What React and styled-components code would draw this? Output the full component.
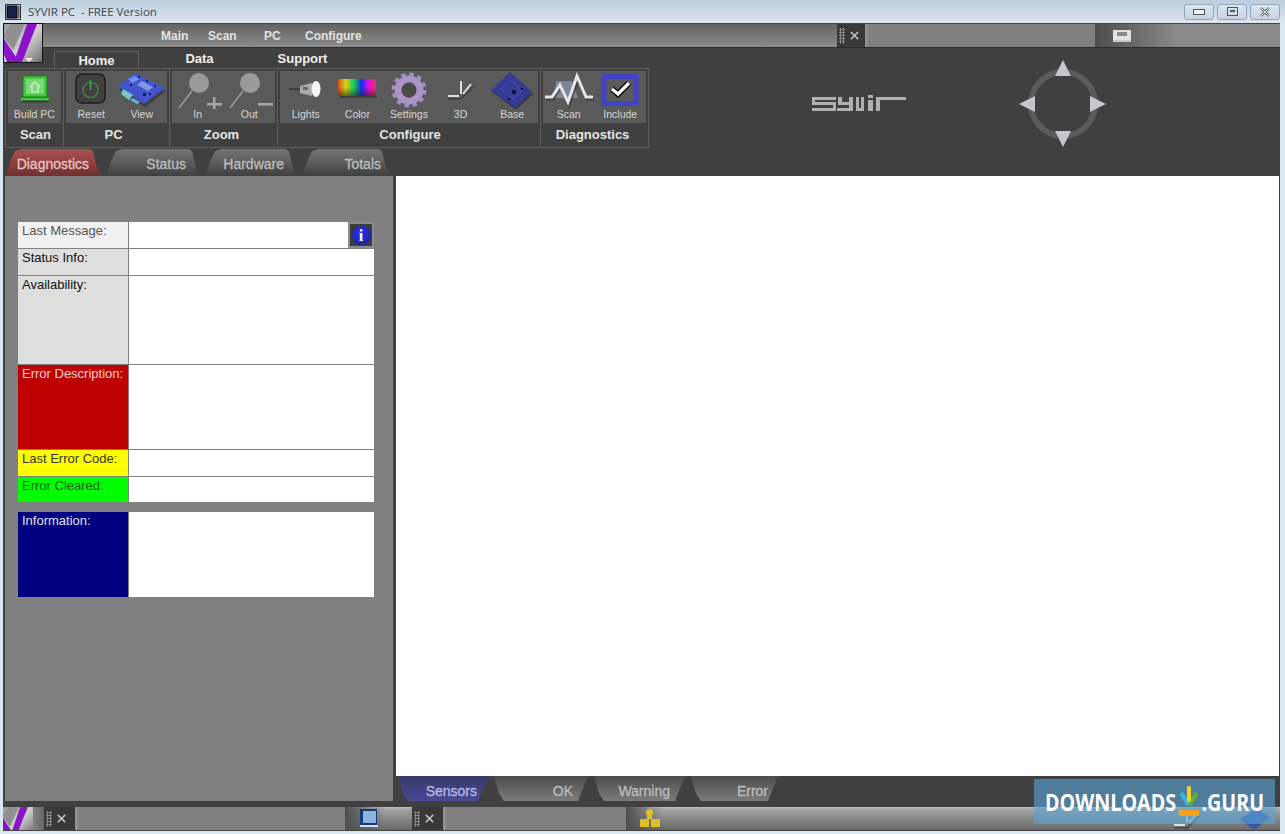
import React from 'react';
import styled, { createGlobalStyle } from 'styled-components';
import { X } from 'lucide-react';

const GlobalStyle = createGlobalStyle`
  html, body { margin: 0; padding: 0; overflow: hidden; }
  body { font-family: "Liberation Sans", Arial, sans-serif; }
`;

function AppMark({ size = 40, id = 'markBg' }) {
  return (
    <svg width={size} height={size} viewBox="0 0 40 40">
      <defs>
        <linearGradient id={id} x1="0" y1="0" x2="1" y2="1">
          <stop offset="0" stopColor="#9a9a9a" />
          <stop offset=".5" stopColor="#cfcfcf" />
          <stop offset="1" stopColor="#666" />
        </linearGradient>
      </defs>
      <rect width="40" height="40" fill={`url(#${id})`} />
      <polygon points="7,0 21,0 9,26 0,13 0,10" fill="#8f8f8f" />
      <polygon points="0,15 12,33 11,38 3,38 0,30" fill="#8a12c8" />
      <polygon points="23,0 33,0 18,38 10,38" fill="#8a12c8" />
      <polygon points="21,34 29,34 25,38" fill="#eee" />
    </svg>
  );
}

function TitleIcon() {
  return (
    <svg width="16" height="16" viewBox="0 0 16 16">
      <rect x="0.5" y="0.5" width="15" height="15" fill="#d8d8d8" stroke="#333" />
      <rect x="2" y="2" width="10" height="12" fill="#15204f" stroke="#000" />
      <rect x="13" y="2" width="1.5" height="12" fill="#555" />
    </svg>
  );
}

function BuildIcon() {
  return (
    <svg width="40" height="36" viewBox="0 0 40 36">
      <rect x="8" y="4" width="24" height="21" fill="#46c742" stroke="#1e7c1c" />
      <rect x="11" y="7" width="18" height="15" fill="#7dd879" />
      <path d="M15 15l5-5 5 5M17 14v6h6v-6" fill="none" stroke="#d6f2d3" strokeWidth="1.1" />
      <rect x="6" y="26" width="28" height="2.5" fill="#3ecb3a" />
      <rect x="7" y="28.5" width="27" height="2" fill="#222" opacity=".55" />
    </svg>
  );
}

function ResetIcon() {
  return (
    <svg width="40" height="36" viewBox="0 0 40 36">
      <rect x="5" y="2" width="29" height="29" rx="6" fill="#404040" stroke="#1c1c1c" strokeWidth="1.5" />
      <circle cx="19.5" cy="18" r="7.5" fill="none" stroke="#3f9a3f" strokeWidth="1.2" />
      <line x1="19.5" y1="8" x2="19.5" y2="18" stroke="#45a845" strokeWidth="1.4" />
    </svg>
  );
}

function BoardIcon() {
  return (
    <svg width="52" height="36" viewBox="0 0 52 36">
      <polygon points="3,16 29,33 50,17 19,2" fill="#222" opacity=".5" transform="translate(0 2)" />
      <polygon points="2,14 28,32 49,16 19,1" fill="#4455cc" />
      <polygon points="7,17 17,23 13,28 5,22" fill="#78c6c4" />
      <polygon points="17,26 24,30 21,32 14,28" fill="#5fb4d8" />
      <polygon points="26,9 37,15 32,19 21,13" fill="#7f97e6" />
      <polygon points="12,7 19,4 24,7 16,11" fill="#6f8fe8" />
      <g fill="#141c5c">
        <rect x="22" y="4" width="2" height="2" />
        <rect x="30" y="8" width="2" height="2" />
        <rect x="38" y="13" width="2" height="2" />
        <rect x="14" y="12" width="2" height="2" />
        <rect x="33" y="21" width="2" height="2" />
        <rect x="27" y="21" width="3" height="3" />
      </g>
    </svg>
  );
}

function ZoomIcon({ out }) {
  return (
    <svg width="50" height="38" viewBox="0 0 50 38">
      <circle cx="26" cy="12" r="10" fill="#9a9a9a" />
      <line x1="19" y1="20" x2="6" y2="37" stroke="#9a9a9a" strokeWidth="1.6" />
      <rect x="34" y="32" width="15" height="2.5" fill="#a8a8a8" />
      {!out && <rect x="40" y="26" width="2.5" height="15" fill="#a8a8a8" />}
    </svg>
  );
}

function LightsIcon() {
  return (
    <svg width="40" height="30" viewBox="0 0 40 30">
      <line x1="3" y1="14" x2="14" y2="14" stroke="#222" />
      <polygon points="14,11 26,8 26,21 14,18" fill="#aaa" />
      <rect x="17" y="12" width="5" height="3" fill="#666" />
      <ellipse cx="30" cy="14" rx="4.5" ry="8" fill="#f4f4f4" />
    </svg>
  );
}

function ColorIcon() {
  return (
    <svg width="40" height="26" viewBox="0 0 40 26">
      <defs>
        <linearGradient id="rainbow" x1="0" y1="0" x2="1" y2="0">
          <stop offset="0" stopColor="#d0501c" />
          <stop offset=".2" stopColor="#e0d010" />
          <stop offset=".42" stopColor="#10d050" />
          <stop offset=".62" stopColor="#1030f0" />
          <stop offset=".8" stopColor="#e010e0" />
          <stop offset="1" stopColor="#f03060" />
        </linearGradient>
        <linearGradient id="rainbowFade" x1="0" y1="0" x2="0" y2="1">
          <stop offset="0" stopColor="#222" stopOpacity="0" />
          <stop offset=".5" stopColor="#222" stopOpacity="0" />
          <stop offset="1" stopColor="#222" stopOpacity=".6" />
        </linearGradient>
      </defs>
      <rect x="1" y="2" width="38" height="17" fill="url(#rainbow)" />
      <rect x="1" y="2" width="38" height="17" fill="url(#rainbowFade)" />
      <rect x="3" y="19" width="37" height="2" fill="#2a2a2a" opacity=".6" />
    </svg>
  );
}

function GearIcon() {
  return (
    <svg width="40" height="36" viewBox="0 0 40 36">
      <circle cx="20" cy="18" r="11" fill="none" stroke="#ab95c8" strokeWidth="7" />
      <circle cx="20" cy="18" r="15.5" fill="none" stroke="#a48ec2" strokeWidth="4" strokeDasharray="4.4 3.7" />
      <circle cx="20" cy="18" r="7.5" fill="#4b4b4b" />
    </svg>
  );
}

function AxesIcon({ color = '#dedede' }) {
  return (
    <svg width="36" height="30" viewBox="0 0 36 30">
      <path d="M5 21H16M18 19V6M20 19L28 9" fill="none" stroke={color} strokeWidth="2" />
      <path d="M5 24H18L31 11" fill="none" stroke="#2f2f2f" strokeWidth="1.5" opacity=".6" />
    </svg>
  );
}

function BaseIcon() {
  return (
    <svg width="46" height="38" viewBox="0 0 46 38">
      <polygon points="2,19 21,1 43,21 26,37" fill="#1e1e1e" opacity=".55" transform="translate(1 2)" />
      <polygon points="2,19 21,1 43,21 26,37" fill="#343a96" />
      <path d="M12 18l10-9 11 11-9 8z" fill="none" stroke="#4d55b8" />
      <circle cx="25" cy="21" r="2" fill="#0a0a20" />
      <rect x="19" y="27" width="2" height="2" fill="#0a0a20" />
      <rect x="32" y="17" width="2" height="2" fill="#0a0a20" />
    </svg>
  );
}

function WaveIcon() {
  return (
    <svg width="50" height="36" viewBox="0 0 50 36">
      <polygon points="12,9 28,9 34,26 10,26" fill="#8a97a8" opacity=".75" />
      <path d="M1 25H8L16 13L24 31L33 4L42 25H49" fill="none" stroke="#222" strokeWidth="3" opacity=".5" transform="translate(1 2)" />
      <path d="M1 25H8L16 13L24 30L33 4L42 25H49" fill="none" stroke="#e6e6e6" strokeWidth="3" />
    </svg>
  );
}

function IncludeIcon() {
  return (
    <svg width="38" height="32" viewBox="0 0 38 32">
      <rect x="3" y="2.5" width="32" height="27" fill="none" stroke="#4343c8" strokeWidth="5" />
      <path d="M11 15l6 5 11-11" fill="none" stroke="#000" strokeWidth="6" />
      <path d="M11 15l6 5 11-11" fill="none" stroke="#fff" strokeWidth="3.2" />
    </svg>
  );
}

function BrandMark() {
  return (
    <svg width="94" height="17" viewBox="0 0 94 17" fill="#b0b0b0" role="img" aria-label="syvir">
      <rect x="0" y="2" width="24" height="3" />
      <rect x="0" y="2" width="3" height="8" />
      <rect x="0" y="7" width="24" height="3" />
      <rect x="21" y="7" width="3" height="9" />
      <rect x="0" y="13" width="24" height="3" />
      <rect x="26" y="2" width="4" height="8" />
      <rect x="26" y="7" width="15" height="3" />
      <rect x="37" y="2" width="4" height="14" />
      <rect x="25" y="13" width="15" height="3" />
      <rect x="44" y="2" width="3" height="14" />
      <rect x="49" y="2" width="3" height="14" />
      <rect x="44" y="13" width="8" height="3" />
      <rect x="56" y="0" width="5" height="3" />
      <rect x="56" y="5" width="5" height="11" />
      <rect x="64" y="2" width="4" height="14" />
      <rect x="64" y="2" width="30" height="3" />
    </svg>
  );
}

function NavPad() {
  return (
    <svg width="88" height="88" viewBox="0 0 88 88" fill="#c6c6cc">
      <circle cx="44" cy="44" r="32" fill="none" stroke="#5b5b5b" strokeWidth="6" />
      <polygon points="44,0 52,16 36,16" />
      <polygon points="44,87 52,71 36,71" />
      <polygon points="0,44 16,36 16,52" />
      <polygon points="87,44 71,36 71,52" />
    </svg>
  );
}

function ScreenGlyph() {
  return (
    <svg width="20" height="14" viewBox="0 0 20 14">
      <rect x="1" y="1" width="18" height="10" fill="#e2e2e2" />
      <rect x="5" y="3" width="10" height="4" fill="#8a8a8a" />
      <rect x="1" y="11" width="18" height="2" fill="#c8c8c8" />
    </svg>
  );
}

function PcBlue() {
  return (
    <svg width="22" height="22" viewBox="0 0 22 22">
      <rect x="2" y="1" width="17" height="16" fill="#123a7c" />
      <rect x="5" y="3" width="13" height="12" fill="#8fb2d8" />
      <rect x="2" y="17" width="18" height="2" fill="#cfe2f5" />
    </svg>
  );
}

function TreeYellow() {
  return (
    <svg width="24" height="20" viewBox="0 0 24 20" fill="#e0c020">
      <circle cx="11.5" cy="3.5" r="3.5" />
      <rect x="9" y="6" width="5" height="4" />
      <rect x="2" y="10" width="9" height="8" />
      <rect x="13" y="10" width="9" height="8" />
    </svg>
  );
}

function BaseSmall() {
  return (
    <svg width="32" height="24" viewBox="0 0 32 24">
      <polygon points="1,12 15,23 31,10 17,1" fill="#3a55a8" />
    </svg>
  );
}

function DownloadMark() {
  return (
    <svg width="31" height="36" viewBox="0 0 31 36">
      <path d="M6 9L15 21" stroke="#36b5e0" strokeWidth="5" />
      <path d="M25 9L16 21" stroke="#5cb531" strokeWidth="5" />
      <rect x="13" y="2" width="5" height="16" rx="2" fill="#f0d020" />
      <rect x="3" y="26" width="25" height="6" rx="1" fill="#f5a31c" />
    </svg>
  );
}

const Window = styled.div`
  position: relative;
  width: 1285px;
  height: 834px;
  overflow: hidden;
  display: flex;
  flex-direction: column;
  background: #dbe6ef;
`;

const TitleBar = styled.header`
  height: 23px;
  flex: none;
  display: flex;
  align-items: center;
  padding: 0 5px;
  background: linear-gradient(#bccddc, #dce7f0);
`;

const TitleText = styled.span`
  margin-left: 7px;
  font: 11.5px "Open Sans", sans-serif;
  color: #3c4650;
  white-space: pre;
`;

const WindowButtons = styled.div`
  margin-left: auto;
  display: flex;
  gap: 3px;
`;

const WindowButton = styled.button`
  width: 30px;
  height: 16px;
  padding: 0;
  display: flex;
  align-items: center;
  justify-content: center;
  border: 1px solid #8fa5ba;
  border-radius: 3px;
  background: linear-gradient(#dbe6f0, #c3d3e1);
  color: #444;
`;

const Frame = styled.div`
  flex: none;
  height: 784px;
  margin: 0 5px 0 3px;
  display: flex;
  flex-direction: column;
  background: #404040;
  border-top: 1px solid #444;
  box-sizing: border-box;
`;

const MenuBar = styled.nav`
  flex: none;
  height: 24px;
  display: flex;
  align-items: stretch;
  border-bottom: 1px solid #2c2c2c;
  box-sizing: border-box;
  background: linear-gradient(#636363, #8c8c8c);
`;

const MenuItems = styled.div`
  width: 834px;
  box-sizing: border-box;
  padding-left: 158px;
  display: flex;
  align-items: center;
`;

const MenuItem = styled.span`
  width: ${p => p.$w}px;
  font-size: 12px;
  font-weight: 700;
  color: #e2e2e2;
`;

const Grabber = styled.div`
  width: ${p => p.$w}px;
  flex: none;
  display: flex;
  align-items: center;
  gap: 3px;
  padding: 0 2px;
  box-sizing: border-box;
  background: #393939;
  color: #d2d2d2;
  border-right: 3px solid #909090;
`;

const Grip = styled.i`
  width: 6px;
  height: 16px;
  flex: none;
  background: radial-gradient(circle, #888 1px, transparent 1.3px) 0 0 / 3px 3px;
`;

const MenuField = styled.div`
  width: 227px;
  flex: none;
  background: #808080;
`;

const MenuRest = styled.div`
  flex: 1;
  display: flex;
  align-items: center;
  padding-left: 17px;
  background: linear-gradient(90deg, #4d4d4d, #8a8a8a 45%);
`;

const LogoButton = styled.div`
  position: absolute;
  left: 3px;
  top: 23px;
  width: 40px;
  height: 40px;
  border: 1px solid #111;
  box-sizing: border-box;
  overflow: hidden;
  line-height: 0;
`;

const TopArea = styled.div`
  flex: none;
  height: 128px;
  display: flex;
`;

const TopLeft = styled.div`
  width: 646px;
  flex: none;
  margin-left: 2px;
`;

const RibbonTabs = styled.div`
  height: 20px;
  display: flex;
  align-items: flex-end;
  padding-left: 49px;
`;

const RibbonTab = styled.div`
  width: ${p => p.$w}px;
  height: ${p => (p.$active ? 17 : 20)}px;
  flex: none;
  box-sizing: border-box;
  display: flex;
  align-items: center;
  justify-content: center;
  font-size: 13px;
  font-weight: 700;
  color: #efefef;
  border: ${p => (p.$active ? '1px solid #5f5f5f' : 'none')};
  border-bottom: none;
`;

const Ribbon = styled.div`
  width: 644px;
  height: 80px;
  display: flex;
  box-sizing: border-box;
  border: 1px solid #5f5f5f;
`;

const RibbonGroup = styled.section`
  width: ${p => p.$w}px;
  flex: none;
  box-sizing: border-box;
  display: flex;
  flex-direction: column;
  padding: 2px 2px 0;
  border-right: ${p => (p.$last ? 'none' : '1px solid #5f5f5f')};
`;

const Tile = styled.div`
  height: 52px;
  display: flex;
  background: #5a5a5a;
`;

const GroupLabel = styled.div`
  flex: 1;
  display: flex;
  align-items: center;
  justify-content: center;
  padding: 0 ${p => p.$r || 0}px 2px ${p => p.$l || 0}px;
  font-size: 13px;
  font-weight: 700;
  color: #e4e4e4;
`;

const ToolButton = styled.div`
  flex: 1;
  min-width: 0;
  display: flex;
  flex-direction: column;
  align-items: center;
`;

const ToolIcon = styled.div`
  height: 37px;
  display: flex;
  align-items: center;
  justify-content: center;
  line-height: 0;
`;

const ToolLabel = styled.span`
  font-size: 10.5px;
  line-height: 12px;
  color: #d6d6d6;
  white-space: nowrap;
`;

const SubTabs = styled.div`
  height: 27px;
  margin-top: 1px;
  display: flex;
  gap: 5px;
  padding-left: 1px;
`;

const Tab = styled.div`
  width: ${p => p.$w}px;
  flex: none;
  box-sizing: border-box;
  display: flex;
  align-items: center;
  justify-content: flex-end;
  padding-right: ${p => p.$pad}px;
  padding-top: 2px;
  font-size: 14px;
  -webkit-text-stroke: 0.3px currentColor;
  color: ${p => p.$fg || '#bdbdbd'};
  background: ${p => p.$bg};
  clip-path: ${p => p.$clip};
`;

const topClip = 'polygon(0 100%, 4px 45%, 9px 8%, 15px 0, calc(100% - 12px) 0, calc(100% - 9px) 8%, calc(100% - 5px) 70%, 100% 100%)';
const bottomClip = 'polygon(0 0, 5px 70%, 10px 100%, calc(100% - 12px) 100%, calc(100% - 8px) 60%, calc(100% - 3px) 10%, 100% 0)';

const BrandArea = styled.div`
  flex: 1;
  display: flex;
  align-items: flex-start;
`;

const BrandLogo = styled.div`
  margin: 47px 0 0 161px;
  line-height: 0;
`;

const BrandNav = styled.div`
  margin: 12px 0 0 113px;
  line-height: 0;
`;

const Main = styled.main`
  flex: none;
  height: 631px;
  display: flex;
  gap: 3px;
  padding-left: 2px;
`;

const SidePanel = styled.aside`
  width: 388px;
  height: 625px;
  flex: none;
  box-sizing: border-box;
  padding: 46px 19px 0 13px;
  background: #808080;
`;

const InfoTable = styled.div`
  display: flex;
  flex-direction: column;
  gap: 1px;
`;

const InfoRow = styled.div`
  height: ${p => p.$h}px;
  display: flex;
  gap: 1px;
  margin-top: ${p => p.$gap || 0}px;
`;

const InfoLabel = styled.div`
  width: 110px;
  flex: none;
  box-sizing: border-box;
  padding: 1px 0 0 4px;
  font-size: 13px;
  line-height: 15px;
  white-space: nowrap;
  background: ${p => p.$bg};
  color: ${p => p.$fg};
`;

const InfoValue = styled.div`
  flex: 1;
  display: flex;
  justify-content: flex-end;
  background: #fff;
`;

const InfoButton = styled.button`
  width: 26px;
  height: 26px;
  padding: 0;
  display: flex;
  align-items: center;
  justify-content: center;
  box-sizing: border-box;
  border: 2px solid #8d8d8d;
  background: #3c3c3c;
`;

const InfoDot = styled.span`
  width: 19px;
  height: 19px;
  border-radius: 50%;
  text-align: center;
  font: 700 16px/19px "Liberation Serif", serif;
  color: #fff;
  background: radial-gradient(circle at 45% 40%, #2c35e8, #141a9c);
`;

const ContentColumn = styled.div`
  width: 883px;
  flex: none;
  display: flex;
  flex-direction: column;
`;

const Canvas = styled.div`
  height: 600px;
  flex: none;
  background: #fff;
`;

const BottomTabs = styled.div`
  height: 25px;
  display: flex;
  gap: 4px;
  padding-left: 2px;
`;

const BottomTab = styled(Tab)`
  padding-top: 4px;
`;

const StatusBar = styled.footer`
  flex: none;
  height: 24px;
  margin: 0 5px 0 3px;
  display: flex;
  align-items: stretch;
  border-bottom: 1px solid #444;
  box-sizing: border-box;
  background: linear-gradient(#c4c4c4 0, #a4a4a4 2px, #686868 100%);
`;

const StatusMark = styled.div`
  width: 41px;
  flex: none;
  overflow: hidden;
  line-height: 0;
  background: linear-gradient(90deg, #555, #a8a8a8 40%, #666);
`;

const StatusField = styled.div`
  width: ${p => p.$w}px;
  flex: none;
  background: #808080;
`;

const StatusGroup = styled.div`
  width: ${p => p.$w}px;
  flex: none;
  display: flex;
  align-items: center;
  padding-left: ${p => p.$pad}px;
  box-sizing: border-box;
  background: linear-gradient(90deg, #4f4f4f, rgba(79, 79, 79, 0) 60%);
`;

const StatusRest = styled.div`
  flex: 1;
  display: flex;
  align-items: center;
  justify-content: flex-end;
  gap: 34px;
  padding-right: 9px;
`;

const BottomEdge = styled.div`
  flex: 1;
  background: #dbe6ef;
`;

const Watermark = styled.div`
  position: absolute;
  left: 1034px;
  top: 779px;
  width: 241px;
  height: 45px;
  display: flex;
  align-items: center;
  justify-content: center;
  background: rgba(90, 163, 211, 0.62);
`;

const WatermarkText = styled.div`
  flex: none;
  display: flex;
  align-items: center;
  color: #fff;
  font: 700 24px "Open Sans", sans-serif;
  transform: scaleX(0.82);
`;

const tools = [
  { w: 58, label: 'Scan', l: 2, items: [['Build PC', <BuildIcon />]] },
  { w: 106, label: 'PC', r: 6, items: [['Reset', <ResetIcon />], ['View', <BoardIcon />]] },
  { w: 108, label: 'Zoom', r: 4, items: [['In', <ZoomIcon />], ['Out', <ZoomIcon out />]] },
  {
    w: 263,
    label: 'Configure',
    l: 2,
    items: [
      ['Lights', <LightsIcon />],
      ['Color', <ColorIcon />],
      ['Settings', <GearIcon />],
      ['3D', <AxesIcon />],
      ['Base', <BaseIcon />],
    ],
  },
  { w: 107, label: 'Diagnostics', r: 4, last: true, items: [['Scan', <WaveIcon />], ['Include', <IncludeIcon />]] },
];

const redTab = 'linear-gradient(#a85252, #8a3c3c 60%, #6e3030)';
const greyTab = 'linear-gradient(#747474, #5a5a5a 55%, #3f3f3f)';
const blueTab = 'linear-gradient(#383868, #4a4a96)';
const greyBottom = 'linear-gradient(#4c4c4c, #7c7c7c)';

function App() {
  return (
    <Window>
      <GlobalStyle />
      <TitleBar>
        <TitleIcon />
        <TitleText>SYVIR PC  - FREE Version</TitleText>
        <WindowButtons>
          <WindowButton>
            <svg width="12" height="6" viewBox="0 0 12 6"><rect x=".5" y=".5" width="11" height="5" fill="#eef3f7" stroke="#555" /></svg>
          </WindowButton>
          <WindowButton>
            <svg width="11" height="9" viewBox="0 0 11 9"><rect x=".5" y=".5" width="10" height="8" fill="none" stroke="#555" /><rect x="3" y="3" width="5" height="2" fill="#555" /></svg>
          </WindowButton>
          <WindowButton>
            <svg width="12" height="10" viewBox="0 0 12 10"><path d="M2 1l8 8M10 1l-8 8" stroke="#555" strokeWidth="2.4" /><path d="M2 1l8 8M10 1l-8 8" stroke="#eef3f7" strokeWidth="1" /></svg>
          </WindowButton>
        </WindowButtons>
      </TitleBar>

      <Frame>
        <MenuBar>
          <MenuItems>
            <MenuItem $w={47}>Main</MenuItem>
            <MenuItem $w={56}>Scan</MenuItem>
            <MenuItem $w={41}>PC</MenuItem>
            <MenuItem $w={70}>Configure</MenuItem>
          </MenuItems>
          <Grabber $w={31}><Grip /><X size={13} strokeWidth={2.4} /></Grabber>
          <MenuField />
          <MenuRest><ScreenGlyph /></MenuRest>
        </MenuBar>

        <TopArea>
          <TopLeft>
            <RibbonTabs>
              <RibbonTab $w={85} $active>Home</RibbonTab>
              <RibbonTab $w={121}>Data</RibbonTab>
              <RibbonTab $w={85}>Support</RibbonTab>
            </RibbonTabs>
            <Ribbon>
              {tools.map(group => (
                <RibbonGroup key={group.label} $w={group.w} $last={group.last}>
                  <Tile>
                    {group.items.map(([label, icon]) => (
                      <ToolButton key={label}>
                        <ToolIcon>{icon}</ToolIcon>
                        <ToolLabel>{label}</ToolLabel>
                      </ToolButton>
                    ))}
                  </Tile>
                  <GroupLabel $l={group.l} $r={group.r}>{group.label}</GroupLabel>
                </RibbonGroup>
              ))}
            </Ribbon>
            <SubTabs>
              <Tab $w={96} $pad={13} $bg={redTab} $clip={topClip} $fg="#e8c4c4">Diagnostics</Tab>
              <Tab $w={94} $pad={15} $bg={greyTab} $clip={topClip}>Status</Tab>
              <Tab $w={92} $pad={14} $bg={greyTab} $clip={topClip}>Hardware</Tab>
              <Tab $w={88} $pad={10} $bg={greyTab} $clip={topClip}>Totals</Tab>
            </SubTabs>
          </TopLeft>
          <BrandArea>
            <BrandLogo><BrandMark /></BrandLogo>
            <BrandNav><NavPad /></BrandNav>
          </BrandArea>
        </TopArea>

        <Main>
          <SidePanel>
            <InfoTable>
              <InfoRow $h={26}>
                <InfoLabel $bg="#f0f0f0" $fg="#555">Last Message:</InfoLabel>
                <InfoValue><InfoButton><InfoDot>i</InfoDot></InfoButton></InfoValue>
              </InfoRow>
              <InfoRow $h={26}>
                <InfoLabel $bg="#dedede" $fg="#111">Status Info:</InfoLabel>
                <InfoValue />
              </InfoRow>
              <InfoRow $h={88}>
                <InfoLabel $bg="#dedede" $fg="#111">Availability:</InfoLabel>
                <InfoValue />
              </InfoRow>
              <InfoRow $h={84}>
                <InfoLabel $bg="#bf0000" $fg="#f4d4d4">Error Description:</InfoLabel>
                <InfoValue />
              </InfoRow>
              <InfoRow $h={26}>
                <InfoLabel $bg="#ffff00" $fg="#333">Last Error Code:</InfoLabel>
                <InfoValue />
              </InfoRow>
              <InfoRow $h={25}>
                <InfoLabel $bg="#00ff00" $fg="#1a5a1a">Error Cleared:</InfoLabel>
                <InfoValue />
              </InfoRow>
              <InfoRow $h={85} $gap={9}>
                <InfoLabel $bg="#000080" $fg="#e0e0e8">Information:</InfoLabel>
                <InfoValue />
              </InfoRow>
            </InfoTable>
          </SidePanel>
          <ContentColumn>
            <Canvas />
            <BottomTabs>
              <BottomTab $w={92} $pad={13} $bg={blueTab} $clip={bottomClip} $fg="#b9b9e2">Sensors</BottomTab>
              <BottomTab $w={96} $pad={17} $bg={greyBottom} $clip={bottomClip}>OK</BottomTab>
              <BottomTab $w={93} $pad={17} $bg={greyBottom} $clip={bottomClip}>Warning</BottomTab>
              <BottomTab $w={89} $pad={12} $bg={greyBottom} $clip={bottomClip}>Error</BottomTab>
            </BottomTabs>
          </ContentColumn>
        </Main>
      </Frame>

      <StatusBar>
        <StatusMark><AppMark size={30} id="statusMarkBg" /></StatusMark>
        <Grabber $w={34}><Grip /><X size={13} strokeWidth={2.6} /></Grabber>
        <StatusField $w={267} />
        <StatusGroup $w={67} $pad={13}><PcBlue /></StatusGroup>
        <Grabber $w={34}><Grip /><X size={13} strokeWidth={2.6} /></Grabber>
        <StatusField $w={180} />
        <StatusGroup $w={60} $pad={12}><TreeYellow /></StatusGroup>
        <StatusRest>
          <AxesIcon />
          <BaseSmall />
        </StatusRest>
      </StatusBar>
      <BottomEdge />

      <LogoButton><AppMark /></LogoButton>
      <Watermark>
        <WatermarkText>DOWNLOADS<DownloadMark />.GURU</WatermarkText>
      </Watermark>
    </Window>
  );
}

export default App;
